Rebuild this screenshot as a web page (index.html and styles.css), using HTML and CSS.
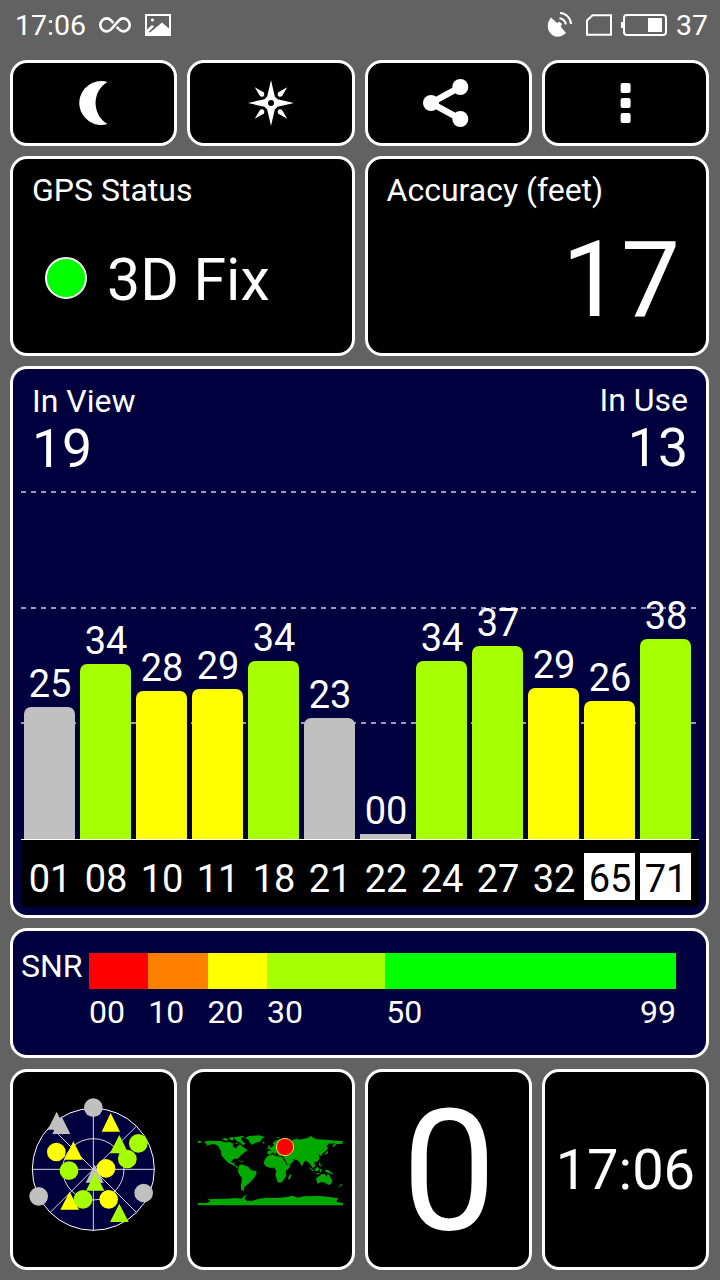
FILE: index.html
```
<!DOCTYPE html>
<html lang="en">
<head>
    <meta charset="UTF-8">
    <meta name="viewport" content="width=device-width, initial-scale=1.0">
    <title>GPS Test</title>
    <link rel="stylesheet" href="styles.css">
</head>
<body>
    <header class="status-bar">
        <span class="clock">17:06</span>
        <svg class="infinity" width="32" height="18" viewBox="0 0 32 18">
            <path d="M17.6 10.8 L20.2 13.4 C21.8 14.9 22.8 15.4 24.2 15.4 A6.5 6.5 0 0 0 24.2 2.4 C22.6 2.4 21.4 3 20 4.4 L12 13.4 C10.6 14.8 9.4 15.4 7.8 15.4 A6.5 6.5 0 0 1 7.8 2.4 C9.4 2.4 10.6 3 12 4.4 L14.4 7" />
        </svg>
        <svg class="picture" width="26" height="22" viewBox="0 0 26 22">
            <rect x="1" y="1" width="24" height="20" />
            <circle cx="7.5" cy="6" r="1.6" />
            <path d="M2 15.5 L7 11 L9 12.5 L3.5 18 L5 18.5 L17 8.5 L25 15.5 V21 H1 Z" />
        </svg>
        <span class="spacer"></span>
        <svg class="satellite" width="25" height="26" viewBox="0 0 25 26">
            <path class="dish" d="M4 5.5 L10 11 L12.5 9.8 L15 12 L13.8 14.8 L19 21 C14 26 6.5 26 2.8 20.5 C-.3 16 .2 10 4 5.5 Z" />
            <path class="wave" d="M12.5 6.2 A7.5 7.5 0 0 1 18.8 12.5 M13 1 A11.5 11.5 0 0 1 24 12" />
        </svg>
        <svg class="sim" width="26" height="22" viewBox="0 0 26 22">
            <path d="M1 20.8 V6.5 L6.5 1.2 H25 V20.8 Z" />
        </svg>
        <svg class="battery" width="46" height="22" viewBox="0 0 46 22">
            <path class="tip" d="M1 8 V14" />
            <rect class="shell" x="3" y="1" width="42" height="20" rx="3" />
            <rect class="charge" x="27" y="4" width="14" height="14" />
        </svg>
        <span class="percent">37</span>
    </header>

    <main class="grid">
        <button class="card button">
            <svg width="50" height="50" viewBox="0 0 50 50">
                <path d="M38.5 3.9 C36.5 3.2 34.5 3 32.4 3 A22 22 0 1 0 38.5 46.1 A24.6 24.6 0 0 1 38.5 3.9 Z" />
            </svg>
        </button>
        <button class="card button">
            <svg width="50" height="50" viewBox="0 0 50 50">
                <path fill-rule="evenodd" d="M25 2 L28.8 18.5 L31.5 21.2 L48 25 L31.5 28.8 L28.8 31.5 L25 48 L21.2 31.5 L18.5 28.8 L2 25 L18.5 21.2 L21.2 18.5 Z M28 25 A3 3 0 1 0 22 25 A3 3 0 1 0 28 25 Z" />
                <path d="M41.2 9.2 L36.4 17.5 Q34.8 19.4 32.8 18.6 Q31 17 32 14.5 Z" />
                <path d="M41.2 40.8 L36.4 32.5 Q34.8 30.6 32.8 31.4 Q31 33 32 35.5 Z" />
                <path d="M8.8 9.2 L13.6 17.5 Q15.2 19.4 17.2 18.6 Q19 17 18 14.5 Z" />
                <path d="M8.8 40.8 L13.6 32.5 Q15.2 30.6 17.2 31.4 Q19 33 18 35.5 Z" />
            </svg>
        </button>
        <button class="card button">
            <svg width="50" height="50" viewBox="0 0 50 50">
                <path class="share-line" d="M37.3 9 L8 25 L37.3 41" />
                <circle cx="8" cy="25" r="8" />
                <circle cx="37.3" cy="9" r="8" />
                <circle cx="37.3" cy="41" r="8" />
            </svg>
        </button>
        <button class="card button">
            <svg width="50" height="50" viewBox="0 0 50 50">
                <rect x="20.6" y="5" width="10" height="10" rx="2" />
                <rect x="20.6" y="20" width="10" height="10" rx="2" />
                <rect x="20.6" y="35" width="10" height="10" rx="2" />
            </svg>
        </button>

        <section class="card wide">
            <h2>GPS Status</h2>
            <div class="fix"><span class="led"></span>3D Fix</div>
        </section>
        <section class="card wide">
            <h2>Accuracy (feet)</h2>
            <div class="accuracy">17</div>
        </section>

        <section class="card full blue signal">
            <div class="counts">
                <div><h2>In View</h2><span>19</span></div>
                <div class="in-use"><h2>In Use</h2><span>13</span></div>
            </div>
            <div class="bars">
                <div class="bar"><span>25</span><i class="grey" style="height: 132px"></i></div>
                <div class="bar"><span>34</span><i class="green" style="height: 175px"></i></div>
                <div class="bar"><span>28</span><i class="yellow" style="height: 148px"></i></div>
                <div class="bar"><span>29</span><i class="yellow" style="height: 150px"></i></div>
                <div class="bar"><span>34</span><i class="green" style="height: 178px"></i></div>
                <div class="bar"><span>23</span><i class="grey" style="height: 121px"></i></div>
                <div class="bar"><span>00</span><i class="grey low" style="height: 5px"></i></div>
                <div class="bar"><span>34</span><i class="green" style="height: 178px"></i></div>
                <div class="bar"><span>37</span><i class="green" style="height: 193px"></i></div>
                <div class="bar"><span>29</span><i class="yellow" style="height: 151px"></i></div>
                <div class="bar"><span>26</span><i class="yellow" style="height: 138px"></i></div>
                <div class="bar"><span>38</span><i class="green" style="height: 200px"></i></div>
            </div>
            <div class="ids">
                <span>01</span><span>08</span><span>10</span><span>11</span><span>18</span><span>21</span>
                <span>22</span><span>24</span><span>27</span><span>32</span><span class="glonass">65</span><span class="glonass">71</span>
            </div>
        </section>

        <section class="card full blue legend">
            <span class="legend-title">SNR</span>
            <div class="scale">
                <i class="red"></i><i class="orange"></i><i class="yellow"></i><i class="green"></i><i class="bright"></i>
                <span>00</span><span>10</span><span>20</span><span>30</span><span class="ends"><b>50</b><b>99</b></span>
            </div>
        </section>

        <section class="card tile">
            <svg class="sky" width="161" height="195" viewBox="9 6 483 585">
                <circle class="disc" cx="250" cy="298" r="183" />
                <circle class="ring" cx="250" cy="298" r="92" />
                <path class="ring" d="M67 298 H433 M250 115 V481 M121 169 L379 427 M379 169 L121 427" />
                <g class="sat-grey">
                    <circle cx="250" cy="113" r="28" />
                    <circle cx="86" cy="379" r="28" />
                    <circle cx="401" cy="369" r="28" />
                    <path d="M140 125 L167 179 H113 Z M154 138 L181 192 H127 Z M254 284 L281 338 H227 Z" />
                </g>
                <g class="sat-yellow">
                    <circle cx="139" cy="246" r="28" />
                    <circle cx="288" cy="295" r="28" />
                    <circle cx="296" cy="388" r="28" />
                    <path d="M302 129 L330 185 H275 Z M190 214 L218 269 H163 Z M179 365 L207 419 H151 Z" />
                </g>
                <g class="sat-green">
                    <path d="M328 195 L355 250 H300 Z M256 307 L283 362 H228 Z M328 401 L356 456 H300 Z" />
                    <circle cx="385" cy="220" r="28" />
                    <circle cx="352" cy="267" r="28" />
                    <circle cx="177" cy="302" r="28" />
                    <circle cx="219" cy="388" r="28" />
                </g>
            </svg>
        </section>
        <section class="card tile">
            <svg class="world" width="161" height="195" viewBox="0 -114 483 585">
                <!-- north and central america -->
                <path d="M24 92 L36 94 L30 99 L24 98 Z M42 97 L52 92 L92 93 L104 97 L120 96 L130 101 L128 109 L138 116 L143 108 L150 103 L160 112 L173 121 L164 127 L155 134 L146 143 L141 148 L136 145 L128 149 L122 156 L130 160 L134 155 L133 164 L140 169 L147 172 L142 174 L130 166 L116 160 L106 150 L94 136 L93 123 L84 108 L72 102 L56 105 L44 109 L52 103 Z" />
                <path d="M96 87 L106 84 L116 89 L108 93 Z M116 83 L128 81 L133 89 L122 91 Z M132 82 L152 79 L164 78 L152 86 L158 94 L166 101 L160 106 L150 98 L141 94 L136 89 Z M136 99 L142 97 L143 104 Z M140 149 L153 153 L163 155 L158 157 L148 153 Z" />
                <!-- greenland, iceland -->
                <path d="M163 85 L178 78 L208 76 L223 80 L215 88 L210 95 L197 98 L186 105 L179 97 L174 88 Z M216 95 L225 96 L220 101 Z" />
                <!-- south america -->
                <path d="M145 174 L148 166 L155 163 L166 167 L175 170 L182 179 L199 184 L200 190 L193 203 L186 211 L177 220 L172 224 L165 229 L161 237 L164 243 L153 240 L153 224 L156 205 L149 195 L144 186 Z" />
                <!-- europe and asia -->
                <path d="M232 131 L233 123 L244 123 L237 117 L246 111 L252 104 L248 100 L256 92 L270 87 L285 91 L302 92 L320 89 L336 88 L354 83 L366 82 L380 88 L410 89 L440 92 L459 94 L458 101 L438 103 L430 112 L427 106 L436 100 L416 101 L410 109 L414 116 L405 125 L398 130 L395 138 L385 132 L389 143 L383 154 L372 158 L376 168 L368 174 L361 163 L354 157 L346 151 L339 163 L335 169 L329 157 L321 150 L307 147 L312 153 L300 162 L293 164 L283 145 L278 137 L266 138 L263 132 L255 126 L258 137 L249 127 L240 134 Z M234 106 L240 108 L242 115 L235 117 Z M232 113 L236 115 L230 118 Z M257 82 L270 81 L267 84 Z M306 91 L318 86 L327 85 L314 93 Z M352 80 L368 79 L364 83 Z M406 130 L414 122 L414 129 L404 136 Z" />
                <!-- africa and madagascar -->
                <path d="M234 137 L251 133 L256 139 L276 140 L281 149 L290 164 L303 163 L297 174 L287 184 L289 197 L281 209 L273 218 L263 217 L259 205 L256 192 L259 184 L253 173 L238 173 L225 167 L221 158 L225 147 Z M300 192 L304 196 L298 210 L294 205 Z" />
                <!-- indonesia, australia, new zealand -->
                <path d="M357 170 L370 181 L372 187 L360 176 Z M373 179 L383 170 L388 176 L384 184 L376 183 Z M373 188 L388 190 L388 193 L374 190 Z M389 178 L396 178 L393 187 L389 186 Z M386 155 L391 161 L394 170 L388 167 Z M404 180 L414 180 L426 188 L430 194 L419 190 L408 186 Z M378 205 L388 198 L396 192 L405 192 L409 200 L414 190 L421 202 L427 211 L423 222 L416 225 L405 218 L394 216 L382 221 Z M453 221 L457 225 L449 231 L444 236 Z" />
                <!-- antarctica -->
                <path d="M24 279 H50 L62 273 L52 268 L70 267 L110 266 L138 264 L154 266 L164 257 L171 253 L163 266 L172 273 L188 272 L207 266 L230 263 L264 264 L288 261 L308 257 L322 263 L342 259 L390 258 L420 261 L444 265 L439 275 L459 279 V286 H24 Z" />
                <circle class="here" cx="285" cy="111" r="26" />
            </svg>
        </section>
        <section class="card tile speed">0</section>
        <section class="card tile time">17:06</section>
    </main>
</body>
</html>
```
FILE: styles.css
```
* {
    box-sizing: border-box;
}
body {
    margin: 0;
    background-color: #626262;
    color: white;
    font-family: Roboto, sans-serif;
}
h2 {
    margin: 0;
    font-size: 32px;
    font-weight: 400;
    line-height: 40px;
}
svg {
    display: block;
    flex: none;
}

/* Status bar */
.status-bar {
    display: flex;
    align-items: center;
    height: 60px;
    padding: 0 12px 10px 15px;
    font-size: 28.5px;
}
.status-bar svg {
    fill: none;
    stroke: white;
    stroke-width: 2;
}
.spacer {
    flex: 1;
}
.infinity {
    margin-left: 13px;
}
.status-bar .infinity {
    stroke-width: 2.6;
}
.picture {
    margin-left: 14px;
}
.picture path,
.picture circle,
.satellite .dish,
.battery .charge {
    fill: white;
    stroke: none;
}
.satellite {
    margin-right: 14px;
}
.sim {
    margin-right: 9px;
}
.battery {
    margin-right: 9px;
}

/* Cards */
.grid {
    display: grid;
    grid-template-columns: repeat(4, 1fr);
    grid-template-rows: 86px 200px 552px 130px 202px;
    gap: 10px;
    padding: 0 11px 0 10px;
}
.card {
    border: 3px solid white;
    border-radius: 17px;
    background-color: black;
    overflow: hidden;
}
.wide {
    grid-column: span 2;
    padding: 11px 19px 0;
}
.full {
    grid-column: 1 / -1;
}
.blue {
    background-color: #00003e;
}
.button {
    display: flex;
    align-items: center;
    justify-content: center;
    padding: 0;
}
.button svg {
    fill: white;
}
.share-line {
    fill: none;
    stroke: white;
    stroke-width: 6.5;
}
.fix {
    display: flex;
    align-items: center;
    height: 138px;
    padding-left: 13px;
    font-size: 59px;
}
.led {
    width: 42px;
    height: 42px;
    margin: 0 20px 3px 0;
    border: 2px solid white;
    border-radius: 50%;
    background-color: #00ff00;
}
.accuracy {
    padding-right: 7px;
    font-size: 105px;
    line-height: 142px;
    text-align: right;
}

/* Colours */
.grey { background-color: #c0c0c0; }
.red { background-color: #ff0000; }
.orange { background-color: #ff8000; }
.yellow { background-color: #ffff00; }
.green { background-color: #a6ff00; }
.bright { background-color: #00ff00; }

/* Signal chart */
.signal {
    --dash: repeating-linear-gradient(90deg, #9a9abc 0 5px, transparent 5px 10px);
    display: flex;
    flex-direction: column;
    padding: 0 7px 8px 8px;
    background-image: var(--dash), var(--dash), var(--dash);
    background-repeat: no-repeat;
    background-size: 675px 2px;
    background-position: 8px 122px, 8px 238px, 8px 353px;
}
.counts {
    display: flex;
    justify-content: space-between;
    height: 110px;
    padding: 12px 11px 0;
}
.counts span {
    font-size: 53.5px;
    line-height: 55px;
}
.in-use {
    margin-top: -1px;
    text-align: right;
}
.bars {
    flex: 1;
    display: flex;
    align-items: flex-end;
    gap: 5px;
    padding-left: 3px;
    border-bottom: 1px solid white;
}
.bar {
    width: 51px;
    font-size: 38px;
    line-height: 44px;
    text-align: center;
}
.bar span {
    display: block;
    margin-bottom: 1px;
    padding-left: 1px;
}
.bar i {
    display: block;
    border-radius: 7px 7px 0 0;
}
.bar .low {
    border-radius: 0;
}
.ids {
    display: flex;
    gap: 5px;
    height: 67px;
    padding: 13px 0 7px 3px;
    background-color: black;
    font-size: 38px;
    line-height: 52px;
    text-align: center;
}
.ids span {
    width: 51px;
    height: 47px;
    padding-left: 1px;
}
.ids .glonass {
    background-color: white;
    color: black;
}

/* SNR legend */
.legend {
    display: flex;
    padding: 22px 30px 0 8px;
    font-size: 32px;
}
.legend-title {
    width: 68px;
    line-height: 26px;
}
.scale {
    flex: 1;
    display: grid;
    grid-template-columns: 59.3px 59.3px 59.3px 118.3px 1fr;
    grid-template-rows: 36px 46px;
    line-height: 46px;
}
.ends {
    display: flex;
    justify-content: space-between;
    padding-left: 1px;
}
.ends b {
    font-weight: 400;
}

/* Bottom tiles */
.tile {
    display: flex;
    align-items: center;
    justify-content: center;
    margin-top: 1px;
}
.disc {
    fill: #00003e;
    stroke: white;
    stroke-width: 3;
}
.ring {
    fill: none;
    stroke: white;
    stroke-width: 2.5;
}
.sat-grey { fill: #c0c0c0; }
.sat-yellow { fill: #ffff00; }
.sat-green { fill: #a6ff00; }
.world {
    fill: #00a800;
}
.here {
    fill: red;
    stroke: #ffd83a;
    stroke-width: 3;
}
.speed {
    padding: 3px 0 0 2px;
    font-size: 168px;
}
.time {
    font-size: 56px;
}
```
